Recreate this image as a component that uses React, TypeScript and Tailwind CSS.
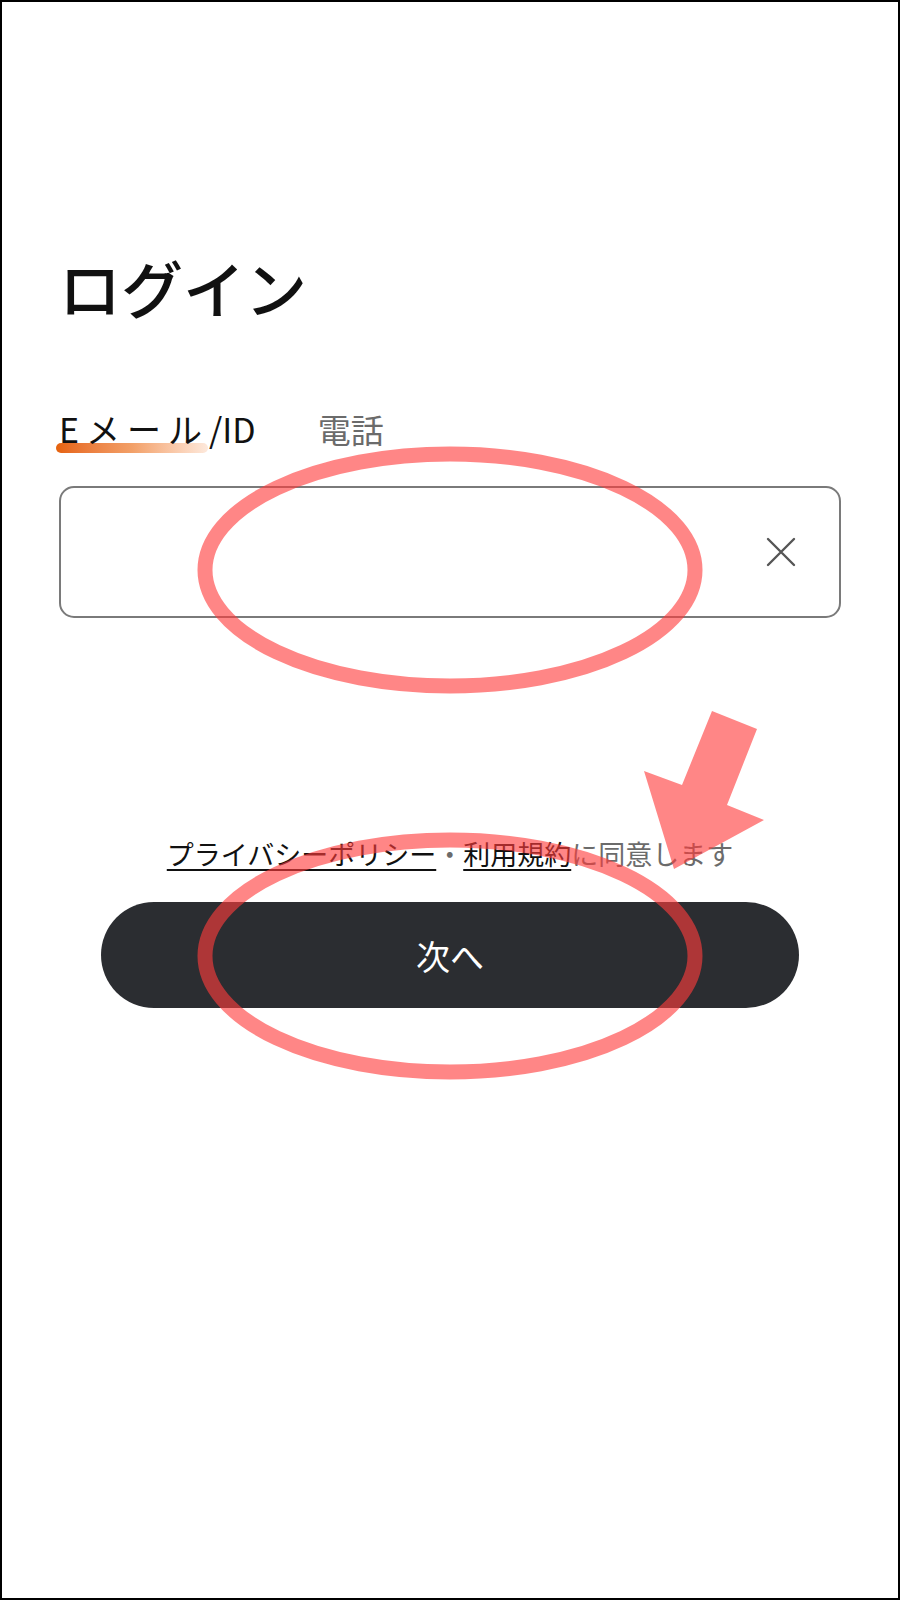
const jp = { fontFamily: '"Noto Sans CJK JP", "Noto Sans", sans-serif' };

function ClearIcon() {
  return (
    <svg width="30" height="30" viewBox="0 0 30 30" fill="none" stroke="#555" strokeWidth="2.4" strokeLinecap="round">
      <path d="M2 2 L28 28 M28 2 L2 28" />
    </svg>
  );
}

// Red annotation marks drawn over the screenshot
function Annotations() {
  const red = 'rgba(255,60,60,0.62)';
  return (
    <svg className="pointer-events-none absolute inset-0" width="900" height="1600" viewBox="0 0 900 1600">
      <ellipse cx="448" cy="568" rx="245" ry="116" fill="none" stroke={red} strokeWidth="15" />
      <ellipse cx="448" cy="954" rx="245" ry="116" fill="none" stroke={red} strokeWidth="15" />
      <polygon
        points="710,709 755,727 725,803 762,818 672,867 642,769 680,783"
        fill={red}
      />
    </svg>
  );
}

export default function App() {
  return (
    <div className="relative h-[1600px] w-[900px] overflow-hidden border-2 border-black bg-white" style={jp}>
      <div className="flex flex-col px-[57px] pt-[254px]">
        <h1 className="text-[62px] font-medium leading-[62px] text-[#111]">ログイン</h1>

        <div className="mt-[94px] flex items-end gap-[62px] text-[33px] leading-[33px]">
          <div className="relative">
            <span className="absolute left-[-3px] top-[31px] h-[10px] w-[152px] rounded-full bg-gradient-to-r from-[#e5620a] via-[#f2a068] to-[#fde9dc]" />
            <span className="relative text-[34px] text-[#111]">
              <span className="tracking-[7px]">Eメール</span>/ID
            </span>
          </div>
          <span className="text-[#6b6b6b]">電話</span>
        </div>

        <div className="mt-[40px] flex h-[132px] items-center justify-end rounded-[15px] border-2 border-[#7a7a7a] pr-[43px]">
          <ClearIcon />
        </div>

        <p className="mt-[222px] text-center text-[27px] leading-[27px] text-[#6b6b6b]">
          <span className="text-[#111] underline decoration-2 underline-offset-[4px]">プライバシーポリシー</span>
          ・
          <span className="text-[#111] underline decoration-2 underline-offset-[4px]">利用規約</span>
          に同意します
        </p>

        <button className="mx-[42px] mt-[35px] flex h-[106px] items-center justify-center rounded-full bg-[#2b2d31] text-[34px] font-normal text-white">
          次へ
        </button>
      </div>

      <Annotations />
    </div>
  );
}
